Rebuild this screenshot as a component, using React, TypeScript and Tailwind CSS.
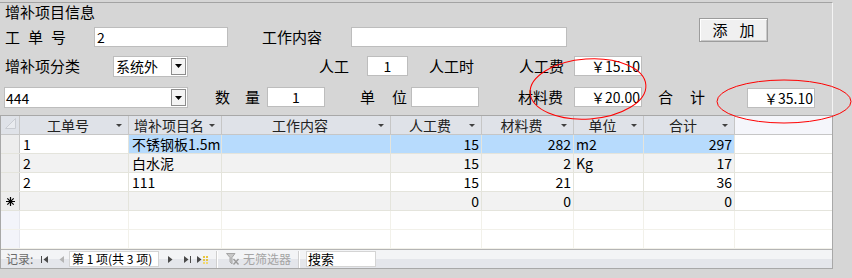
import React from "react";

function Tri({ color = "#000" }: { color?: string }) {
  return (
    <svg width="7" height="4" viewBox="0 0 7 4">
      <path d="M0 0H7L3.5 4Z" fill={color} />
    </svg>
  );
}

function DropBtn() {
  return (
    <div className="w-[15px] h-[17px] mr-[1px] bg-[#f4f4f4] border border-[#8c8c8c] flex items-center justify-center">
      <Tri />
    </div>
  );
}

function HArrow() {
  return (
    <svg width="6" height="3" viewBox="0 0 6 3" className="mr-[6px] shrink-0">
      <path d="M0 0H6L3 3Z" fill="#404040" />
    </svg>
  );
}

const cols = [
  "w-[19px]",
  "w-[109px]",
  "w-[93px]",
  "w-[169px]",
  "w-[91px]",
  "w-[92px]",
  "w-[70px]",
  "w-[91px]",
];

const headers = ["工单号", "增补项目名", "工作内容", "人工费", "材料费", "单位", "合计"];

type Row = {
  id: string;
  name: string;
  labor: string;
  mat: string;
  unit: string;
  total: string;
};

const rows: Row[] = [
  { id: "1", name: "不锈钢板1.5m", labor: "15", mat: "282", unit: "m2", total: "297" },
  { id: "2", name: "白水泥", labor: "15", mat: "2", unit: "Kg", total: "17" },
  { id: "2", name: "111", labor: "15", mat: "21", unit: "", total: "36" },
  { id: "", name: "", labor: "0", mat: "0", unit: "", total: "0" },
];

function Asterisk() {
  return (
    <svg width="9" height="9" viewBox="0 0 9 9">
      <path d="M4.5 0V9M0 4.5H9M1.3 1.3L7.7 7.7M7.7 1.3L1.3 7.7" stroke="#000" strokeWidth="1.2" />
    </svg>
  );
}

export default function App() {
  return (
    <div className="relative w-[852px] h-[278px] overflow-hidden bg-[#d6d6d6] text-black font-['Noto_Sans_CJK_SC',sans-serif]">
      <div className="w-[833px] pt-[2px]">
        {/* form area */}
        <div className="border-t border-[#a3a3a3] border-r border-r-[#f4f4f4] pb-[7px]">
          <div className="flex">
            <div className="w-[567px]">
              <div className="h-[17px] pl-[5px] text-[15px] leading-[17px]">增补项目信息</div>
              <div className="mt-[7px] flex items-center h-[20px]">
                <div className="w-[94px] pl-[5px] text-[15px] leading-[20px] tracking-[8px] whitespace-nowrap">工单号</div>
                <div className="w-[134px] h-[20px] bg-white border border-[#bdbdbd] text-[14px] leading-[18px] pl-[2px]">2</div>
                <div className="ml-[34px] w-[89px] text-[15px] leading-[20px] whitespace-nowrap">工作内容</div>
                <div className="w-[216px] h-[20px] bg-white border border-[#bdbdbd]" />
              </div>
            </div>
            <div className="ml-[132px] mt-[15px] w-[69px] h-[24px] bg-[#f0f0f0] border border-[#9c9c9c] shadow-[inset_1px_1px_0_#ffffff,inset_-1px_-1px_0_#c8c8c8] flex items-center justify-center text-[15px] leading-[20px] tracking-[12px] pl-[12px] whitespace-nowrap">
              添加
            </div>
          </div>

          {/* row 3 */}
          <div className="mt-[8px] flex items-center h-[22px]">
            <div className="w-[113px] pl-[5px] text-[15px] leading-[20px] whitespace-nowrap">增补项分类</div>
            <div className="w-[75px] h-[21px] bg-white border border-[#bdbdbd] flex items-center">
              <span className="flex-1 pl-[2px] text-[14px] leading-[18px] whitespace-nowrap">系统外</span>
              <DropBtn />
            </div>
            <div className="ml-[131px] w-[48px] text-[15px] leading-[20px] whitespace-nowrap">人工</div>
            <div className="w-[41px] h-[20px] bg-white border border-[#bdbdbd] text-[14px] leading-[18px] text-center">1</div>
            <div className="ml-[21px] w-[90px] text-[15px] leading-[20px] whitespace-nowrap">人工时</div>
            <div className="w-[55px] text-[15px] leading-[20px] whitespace-nowrap">人工费</div>
            <div className="w-[68px] h-[20px] bg-white border border-[#bdbdbd] text-[14px] leading-[18px] text-right pr-[1px] whitespace-nowrap">￥15.10</div>
          </div>

          {/* row 4 */}
          <div className="mt-[10px] flex items-start h-[21px]">
            <div className="ml-[4px] w-[184px] h-[21px] bg-white border border-[#bdbdbd] flex items-center">
              <span className="flex-1 pl-[1px] text-[14px] leading-[18px]">444</span>
              <DropBtn />
            </div>
            <div className="ml-[27px] w-[52px] text-[15px] leading-[20px] tracking-[15px] whitespace-nowrap overflow-visible">数量</div>
            <div className="w-[58px] h-[20px] bg-white border border-[#bdbdbd] text-[14px] leading-[18px] text-center">1</div>
            <div className="ml-[35px] w-[51px] text-[15px] leading-[20px] tracking-[17px] whitespace-nowrap overflow-visible">单位</div>
            <div className="w-[68px] h-[20px] bg-white border border-[#bdbdbd]" />
            <div className="ml-[39px] w-[56px] text-[15px] leading-[20px] whitespace-nowrap">材料费</div>
            <div className="w-[68px] h-[20px] bg-white border border-[#bdbdbd] text-[14px] leading-[18px] text-right pr-[1px] whitespace-nowrap">￥20.00</div>
            <div className="ml-[16px] w-[89px] text-[15px] leading-[20px] tracking-[17px] whitespace-nowrap">合计</div>
            <div className="self-end w-[68px] h-[20px] bg-white border border-[#bdbdbd] text-[14px] leading-[18px] text-right pr-[1px] whitespace-nowrap">￥35.10</div>
          </div>
        </div>

        {/* datasheet */}
        <div className="border border-[#a8a8a8] bg-white text-[14px]">
          {/* header */}
          <div className="flex h-[19px] border-b border-[#c6c6c6]">
            <div className={`${cols[0]} shrink-0 bg-[#dfe2e8] border-r border-[#c6c6c6] flex items-start justify-start pl-[4px] pt-[2px]`}>
              <svg width="11" height="11" viewBox="0 0 11 11">
                <path d="M10.5 0.5V10.5H0.5Z" fill="#e9ebef" stroke="#c9ccd2" strokeWidth="1" />
              </svg>
            </div>
            {headers.map((h, i) => (
              <div
                key={h}
                className={`${cols[i + 1]} shrink-0 bg-[#dfe2e8] border-r border-[#c6c6c6] flex items-center overflow-hidden`}
              >
                <span className="flex-1 text-center leading-[18px] text-[#222] whitespace-nowrap">{h}</span>
                <HArrow />
              </div>
            ))}
            <div className="flex-1 bg-[#f5f6fb]" />
          </div>

          {/* data rows */}
          {rows.map((r, ri) => {
            const alt = ri % 2 === 1;
            const sel = ri === 0;
            const base = alt ? "bg-[#f2f2f2]" : "bg-white";
            const cellBg = sel ? "bg-[#b7dbfd]" : base;
            const isNew = ri === 3;
            return (
              <div key={ri} className="flex h-[19px] border-b border-[#e4e4dc]">
                <div className={`${cols[0]} shrink-0 bg-[#ededed] border-r border-[#c8c8c8] flex items-center justify-center`}>
                  {isNew ? <Asterisk /> : null}
                </div>
                <div className={`${cols[1]} shrink-0 ${base} border-r border-[#e4e4dc] pl-[3px] leading-[18px] overflow-hidden whitespace-nowrap`}>{r.id}</div>
                <div className={`${cols[2]} shrink-0 ${cellBg} border-r border-[#e4e4dc] pl-[3px] leading-[18px] overflow-hidden whitespace-nowrap`}>{r.name}</div>
                <div className={`${cols[3]} shrink-0 ${cellBg} border-r border-[#e4e4dc]`} />
                <div className={`${cols[4]} shrink-0 ${cellBg} border-r border-[#e4e4dc] pr-[2px] text-right leading-[18px]`}>{r.labor}</div>
                <div className={`${cols[5]} shrink-0 ${cellBg} border-r border-[#e4e4dc] pr-[2px] text-right leading-[18px]`}>{r.mat}</div>
                <div className={`${cols[6]} shrink-0 ${cellBg} border-r border-[#e4e4dc] pl-[2px] leading-[18px]`}>{r.unit}</div>
                <div className={`${cols[7]} shrink-0 ${cellBg} border-r border-[#e4e4dc] pr-[2px] text-right leading-[18px]`}>{r.total}</div>
                <div className="flex-1 bg-white" />
              </div>
            );
          })}

          {/* blank rows */}
          {[0, 1].map((b) => (
            <div key={b} className="flex h-[19px] border-b border-[#f2f1ea]">
              <div className={`${cols[0]} shrink-0 bg-[#f3f4fa] border-r border-[#e6e7ee]`} />
              {cols.slice(1).map((c, i) => (
                <div key={i} className={`${c} shrink-0 border-r border-[#f2f1ea]`} />
              ))}
              <div className="flex-1" />
            </div>
          ))}

          {/* navigation bar */}
          <div className="flex items-center h-[19px] bg-[linear-gradient(#f3f4f6_0%,#f3f4f6_48%,#e4e6eb_48%,#e4e6eb_100%)] border-t border-[#b4b4b4] text-[12px]">
            <span className="ml-[5px] w-[28px] text-[#6a6a6a] leading-[16px] whitespace-nowrap">记录:</span>
            <svg width="7" height="7" viewBox="0 0 7 7" className="ml-[7px]">
              <path d="M0.5 0V7" stroke="#4a4a4a" strokeWidth="1" />
              <path d="M7 0V7L2.5 3.5Z" fill="#4a4a4a" />
            </svg>
            <svg width="5" height="7" viewBox="0 0 5 7" className="ml-[11px]">
              <path d="M5 0V7L0.5 3.5Z" fill="#b4b4b4" />
            </svg>
            <div className="ml-[5px] w-[90px] h-[16px] bg-white border border-[#d4d4d4] text-[12px] leading-[14px] pl-[2px] whitespace-nowrap">
              第 1 项(共 3 项)
            </div>
            <svg width="5" height="7" viewBox="0 0 5 7" className="ml-[9px]">
              <path d="M0 0V7L4.5 3.5Z" fill="#4a4a4a" />
            </svg>
            <svg width="7" height="7" viewBox="0 0 7 7" className="ml-[11px]">
              <path d="M0 0V7L4.5 3.5Z" fill="#4a4a4a" />
              <path d="M6.5 0V7" stroke="#4a4a4a" strokeWidth="1" />
            </svg>
            <svg width="13" height="9" viewBox="0 0 13 9" className="ml-[6px]">
              <path d="M0 1V8L4.5 4.5Z" fill="#4a4a4a" />
              <rect x="6" y="1" width="2" height="2" fill="#e8c640" />
              <rect x="9" y="1" width="2" height="2" fill="#e8c640" />
              <rect x="6" y="4" width="2" height="2" fill="#e8c640" />
              <rect x="9" y="4" width="2" height="2" fill="#e8c640" />
              <rect x="6" y="7" width="2" height="2" fill="#f0d870" />
              <rect x="9" y="7" width="2" height="2" fill="#f0d870" />
            </svg>
            <div className="ml-[6px] w-[2px] h-[17px] border-l border-[#cfcfcf] border-r border-r-white" />
            <svg width="14" height="13" viewBox="0 0 14 13" className="ml-[8px]">
              <path d="M0.5 0.5H9L6 4.5V11L4 9V4.5Z" fill="#c8c8c8" stroke="#a6a6a6" strokeWidth="1" />
              <path d="M7.5 6L12.5 11.5M12.5 6L7.5 11.5" stroke="#9a9a9a" strokeWidth="1.4" />
            </svg>
            <span className="ml-[3px] w-[50px] text-[#a4a4a4] leading-[16px] whitespace-nowrap">无筛选器</span>
            <div className="ml-[5px] w-[2px] h-[17px] border-l border-[#cfcfcf] border-r border-r-white" />
            <div className="ml-[6px] w-[70px] h-[16px] bg-white border border-[#d4d4d4] text-[13px] leading-[14px] pl-[1px] whitespace-nowrap">
              搜索
            </div>
          </div>
        </div>
      </div>

      {/* annotation ellipses */}
      <svg className="absolute inset-0 pointer-events-none" width="852" height="278" viewBox="0 0 852 278">
        <ellipse cx="588" cy="89" rx="58" ry="30" fill="none" stroke="#ff0000" strokeWidth="1" transform="rotate(-4 588 89)" />
        <ellipse cx="784" cy="101.5" rx="67" ry="21.5" fill="none" stroke="#ff0000" strokeWidth="1" />
      </svg>
    </div>
  );
}
